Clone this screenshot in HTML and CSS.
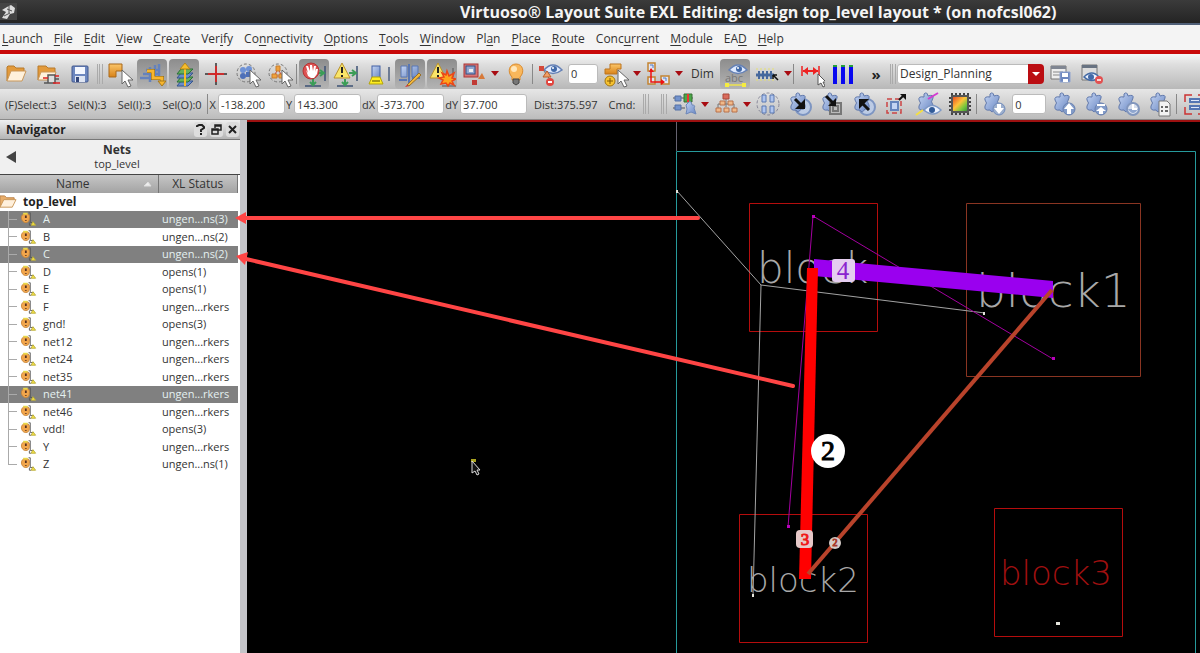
FILE: index.html
```html
<!DOCTYPE html>
<html lang="en">
<head>
<meta charset="utf-8">
<title>Virtuoso Layout Suite EXL</title>
<link rel="stylesheet" href="styles.css">
</head>
<body>
<svg class="defs" aria-hidden="true">
  <defs>
    <linearGradient id="gold" x1="0" y1="0" x2="0" y2="1"><stop offset="0" stop-color="#fbc66a"/><stop offset="1" stop-color="#d88218"/></linearGradient>
    <linearGradient id="blue" x1="0" y1="0" x2="1" y2="1"><stop offset="0" stop-color="#c4d4f2"/><stop offset="1" stop-color="#6a88c4"/></linearGradient>
    <linearGradient id="heat" x1="0" y1="0" x2="1" y2="1"><stop offset="0" stop-color="#e53a1c"/><stop offset=".45" stop-color="#ffc23a"/><stop offset=".7" stop-color="#7ec83c"/><stop offset="1" stop-color="#2b8a3a"/></linearGradient>
    <symbol id="folder" viewBox="0 0 28 28"><path d="M5 21V7l1-1h6l2 2h8v4" fill="#e39a3b" stroke="#b87a2d"/><path d="M5 21l4-10h15l-4 10z" fill="#fff1dc" stroke="#c9975a"/></symbol>
    <symbol id="cursor" viewBox="0 0 28 28"><path d="M16 10v14l3-3 3 6 3-1-3-6h5z" fill="#fff" stroke="#666"/></symbol>
    <symbol id="folderin" viewBox="0 0 28 28"><path d="M4 20V6h8l2 2h7v5" fill="#e39a3b" stroke="#b87a2d"/><path d="M4 20l3-8h15l-3 8z" fill="#fff1dc" stroke="#c9975a"/><path d="M10 23h4v-8h7v8h-7M21 19h4" fill="#ddd" stroke="#555" stroke-width="1.5"/><path d="M9 18h5M21 16h4M19 23h7" stroke="#d22" stroke-width="1.5"/></symbol>
    <symbol id="save" viewBox="0 0 28 28"><rect x="6" y="6" width="16" height="16" rx="1" fill="#6d87bf" stroke="#43598f"/><rect x="9" y="7" width="10" height="7" fill="#f4f7ff"/><rect x="9" y="16" width="10" height="6" fill="#dfe5f2"/><rect x="10" y="17" width="3" height="5" fill="#34477a"/></symbol>
    <symbol id="select" viewBox="0 0 28 28"><path d="M3 4h13v7H10v6H3z" fill="url(#gold)" stroke="#a9691b"/><use href="#cursor"/></symbol>
    <symbol id="route" viewBox="0 0 28 28"><path d="M2 18h14M5 14h17M8 10h13M12 22V7M17 18V5M21 16V4" stroke="#6482bd" stroke-width="2.500" fill="none"/><path d="M9 11h6v7h9v4" fill="none" stroke="#806018" stroke-width="4"/><path d="M9 11h6v7h9v4" fill="none" stroke="#f8b62d" stroke-width="3"/><path d="M20 21h8l-4 5z" fill="#f8b62d" stroke="#a5781d"/></symbol>
    <symbol id="layers" viewBox="0 0 28 28"><path d="M7 26l4-5h12l-5 5z" fill="#6a8ccb" stroke="#34558c"/><path d="M7 22l4-5h12l-5 5z" fill="#67b05b" stroke="#29703a"/><path d="M7 18l4-5h12l-5 5z" fill="#6a8ccb" stroke="#34558c"/><path d="M7 14l4-5h12l-5 5z" fill="#67b05b" stroke="#29703a"/><path d="M15 5v21" stroke="#f7bd2a" stroke-width="2"/><path d="M10 9l5-6 5 6z" fill="#f7bd2a" stroke="#b5851c"/></symbol>
    <symbol id="cross" viewBox="0 0 28 28"><path d="M14 3v22M3 14h22" stroke="#333" stroke-width="1.500"/><path d="M14 6v16M6 14h16" stroke="#f02020" stroke-width="1.500"/></symbol>
    <symbol id="selblue" viewBox="0 0 28 28"><circle cx="12" cy="13" r="9" fill="none" stroke="#777" stroke-dasharray="3 2"/><path d="M12 12h5v5h-5z" fill="#4e70b8"/><circle cx="15" cy="9" r="3" fill="#6e92d6"/><circle cx="9" cy="10" r="3" fill="#6e92d6"/><circle cx="9" cy="16" r="3" fill="#4e70b8"/><use href="#cursor"/></symbol>
    <symbol id="selgold" viewBox="0 0 28 28"><circle cx="12" cy="13" r="9" fill="none" stroke="#777" stroke-dasharray="3 2"/><path d="M12 9l-4 7h8z" stroke="#c44" fill="none"/><path d="M10 6h4v5h-4zM6 14h5v4H6zM13 14h5v4h-5z" fill="#f0a13c" stroke="#c67c2c"/><use href="#cursor"/></symbol>
    <symbol id="rails" viewBox="0 0 28 28"><path d="M25 6v15M5 26h16" stroke="#3c5274" stroke-width="1.500"/><path d="M17 13h7M20 10l4 3-4 3M13 19v6M10 22l3 3 3-3" fill="none" stroke="#3b9d57" stroke-width="2"/></symbol>
    <symbol id="hand" viewBox="0 0 28 28"><use href="#rails"/><circle cx="11" cy="11" r="8" fill="#dd5252" stroke="#b53434"/><path d="M6 10l2 6 3 2h3l3-4 1-5h-2l-1 3 1-6h-2l-1 5-1-6H10v6L8 6H6l2 7z" fill="#fff"/></symbol>
    <symbol id="tri" viewBox="0 0 28 28"><path d="M10 3L2 18h16z" fill="#f9e568" stroke="#b9912e" stroke-linejoin="round"/><path d="M10 7v6M10 15v2" stroke="#222" stroke-width="2"/></symbol>
    <symbol id="warn" viewBox="0 0 28 28"><use href="#rails"/><use href="#tri"/></symbol>
    <symbol id="marker" viewBox="0 0 28 28"><rect x="8" y="6" width="8" height="12" fill="url(#blue)" stroke="#4361a5"/><path d="M8 17h8l3 7H5z" fill="#ffee20" stroke="#b3a30c"/><path d="M8 21h8" stroke="#554d00"/><path d="M25 7v14" stroke="#6d7b94" stroke-width="2"/></symbol>
    <symbol id="pencil" viewBox="0 0 28 28"><path d="M5 6h6v11H5zM16 6h6v11h-6z" fill="url(#blue)" stroke="#5876b3"/><path d="M13 4v21M3 20h8M16 18h8" stroke="#5876b3" stroke-width="2"/><path d="M11 25l12-12 2 2-12 11z" fill="#f2b73c" stroke="#996f28"/><path d="M11 25l2 1-4 1z" fill="#d22"/></symbol>
    <symbol id="boom" viewBox="0 0 28 28"><use href="#tri"/><path d="M14 26h14M25 8v9" stroke="#555"/><path d="M19 11l2 5 5-3-2 5 4 1-4 2 2 4-4-2-2 3-2-3-5 1 2-4-4-2 5-1-2-4 4 2z" fill="#ffa51c" stroke="#ec4617" stroke-width="1.500"/></symbol>
    <symbol id="blocks" viewBox="0 0 28 28"><rect x="4" y="4" width="14" height="13" fill="#d77474" stroke="#aa3434"/><rect x="6" y="6" width="9" height="8" fill="#92a6cf" stroke="#315086"/><rect x="9" y="9" width="4" height="3" fill="#eee"/><path d="M12 20h5v5h-5z" fill="#c13a35"/><path d="M22 13l-4 6h7z" fill="#d77a3a"/></symbol>
    <symbol id="bulb" viewBox="0 0 28 28"><path d="M10 17C5 12 7 4 14 4s9 8 4 13v3h-8z" fill="#f9b75b" stroke="#d98b30"/><circle cx="12" cy="9" r="3" fill="#ffe6ba"/><path d="M11 19h6v4l-3 2-3-2z" fill="#777" stroke="#444"/></symbol>
    <symbol id="eye" viewBox="0 0 28 28"><path d="M8 10q9-10 18 0-9 7-18 0z" fill="#dfeaff" stroke="#6581b5" stroke-width="1.500"/><circle cx="18" cy="9" r="3" fill="#426aa8"/><circle cx="17" cy="8" r="1" fill="#fff"/></symbol>
    <symbol id="eyetree" viewBox="0 0 28 28"><use href="#eye"/><path d="M6 8l4 6 5 7" stroke="#777" fill="none"/><path d="M3 6h5v5H3z" fill="#d4483a"/><path d="M11 11l-4 6h8z" fill="#efa067" stroke="#b85c28"/><circle cx="14" cy="22" r="4" fill="#e2463f"/><path d="M12 22h4" stroke="#fff" stroke-width="2"/></symbol>
    <symbol id="addsel" viewBox="0 0 28 28"><path d="M8 4h11v5h-4v5H3V9h5z" fill="url(#gold)" stroke="#bd741e"/><circle cx="8" cy="21" r="5" fill="#f7c22f" stroke="#a37510"/><path d="M8 18v6M5 21h6" stroke="#805908"/><use href="#cursor"/></symbol>
    <symbol id="path" viewBox="0 0 28 28"><path d="M4 3h7v8H4zM17 16h8v8h-8zM4 17h7v7H4z" fill="#dfe5f4" stroke="#c48431" stroke-width="1.500"/><path d="M7 9v13h12" fill="none" stroke="#e11" stroke-width="1.500"/><path d="M5 12l2-4 3 4zM17 19l4 3-4 3z" fill="#e11"/><path d="M6 5h3v3M19 18h3v3" stroke="#557bc0" fill="none"/></symbol>
    <symbol id="abc" viewBox="0 0 28 28"><use href="#eye"/><path d="M5 25h18" stroke="#eee34d" stroke-width="1.500"/><path d="M4 23h4v4H4zM21 23h4v4h-4z" fill="#f5ec40"/></symbol>
    <symbol id="comb" viewBox="0 0 28 28"><path d="M3 9h19M3 20h19" stroke="#e6e070" stroke-dasharray="2 2"/><path d="M3 15h18" stroke="#46689d" stroke-width="3"/><path d="M6 11v8M10 11v8M14 11v8M18 11v8" stroke="#46689d" stroke-width="2"/><path d="M20 15h4M20 15v4M20 15l5 5" stroke="#111" fill="none" stroke-width="1.500"/></symbol>
    <symbol id="ruler" viewBox="0 0 28 28"><path d="M5 6v10M22 6v10" stroke="#e22" stroke-width="1.500"/><path d="M6 11h15" stroke="#e22" stroke-width="2"/><path d="M11 7l-5 4 5 4zM16 7l5 4-5 4z" fill="#e22"/><path d="M21 14v11l3-2 2 4 2-1-2-4h3z" fill="#fff" stroke="#555"/></symbol>
    <symbol id="bars" viewBox="0 0 28 28"><path d="M4 6h4v18H4zM12 6h4v18h-4zM20 6h4v18h-4z" fill="#0808f0"/><path d="M4 5h4v2H4zM12 5h4v2h-4zM20 5h4v2h-4z" fill="#24a03a"/></symbol>
    <symbol id="panelsave" viewBox="0 0 28 28"><path d="M5 6h15v13H5z" fill="#eee" stroke="#777"/><path d="M5 6h15v3H5z" fill="#808692"/><path d="M7 12h10M7 15h8" stroke="#888"/><path d="M14 12h10v10H14z" fill="#6d87bf" stroke="#8fa3cf"/><path d="M16 13h6v4h-6zM17 19h5v3h-5z" fill="#fff"/></symbol>
    <symbol id="paneleye" viewBox="0 0 28 28"><path d="M4 5h15v15H4z" fill="#ddd" stroke="#777"/><path d="M4 5h15v3H4z" fill="#687382"/><path d="M6 17q8-8 15 0-7 7-15 0z" fill="#edf3ff" stroke="#456ba5" stroke-width="1.500"/><circle cx="13" cy="17" r="3" fill="#426aa8"/><circle cx="21" cy="20" r="4" fill="#e25151"/><path d="M19 20h4" stroke="#fff" stroke-width="1.500"/></symbol>
    <symbol id="star" viewBox="0 0 28 28"><path d="M10 4q3-3 4 2 6-2 5 2-3 4 0 7 1 5-4 4-3 5-5 1-6 1-5-4 3-3 0-6-1-4 5-3z" fill="url(#blue)" stroke="#6078ab"/></symbol>
    <symbol id="align" viewBox="0 0 28 28"><path d="M3 8h20M3 18h12" stroke="#555"/><path d="M5 6h6v5H5zM5 15h6v5H5z" fill="#7393cc" stroke="#5571a5"/><path d="M14 4h8v8h-8z" fill="#48a846" stroke="#396f35"/><path d="M18 4v8" stroke="#e33" stroke-width="2"/><path d="M19 12q2-2 3 3 4 0 2 3l2 6-5-2-5 2 1-5-1-4z" fill="url(#blue)" stroke="#6d87b9"/></symbol>
    <symbol id="tree" viewBox="0 0 28 28"><path d="M14 9v8M6 18v-4h16v4" stroke="#777" fill="none"/><path d="M11 4h6v5h-6z" fill="#d96b5c" stroke="#a94838"/><path d="M8 11h5v4H8zM16 11h5v4h-5zM4 18h5v4H4zM12 18h5v4h-5zM20 18h5v4h-5z" fill="#f0b989" stroke="#b8704a"/></symbol>
    <symbol id="four" viewBox="0 0 28 28"><circle cx="14" cy="14" r="11" fill="none" stroke="#889" stroke-dasharray="3 2"/><path d="M8 5h4v7H8zM16 5h4v7h-4zM8 16h4v7H8zM16 16h4v7h-4z" fill="#afc5ef" stroke="#5b78b1"/></symbol>
    <symbol id="starin" viewBox="0 0 28 28"><circle cx="17" cy="17" r="8" fill="#bccbe5" stroke="#7d95c2" stroke-width="2"/><use href="#star"/><path d="M9 9l7 7" stroke="#111" stroke-width="3"/><path d="M19 9v10H9z" fill="#111"/></symbol>
    <symbol id="starchip" viewBox="0 0 28 28"><use href="#star"/><path d="M12 13h11v11H12zM15 16h5v5h-5z" fill="#bbb" stroke="#777" stroke-width="2"/><path d="M8 6l8 8" stroke="#111" stroke-width="3"/><path d="M18 8v8h-8z" fill="#111"/></symbol>
    <symbol id="starout" viewBox="0 0 28 28"><circle cx="17" cy="17" r="8" fill="#bccbe5" stroke="#7d95c2" stroke-width="2"/><use href="#star"/><path d="M19 20l-7-7" stroke="#111" stroke-width="3"/><path d="M9 19V9h10z" fill="#111"/></symbol>
    <symbol id="expand" viewBox="0 0 28 28"><path d="M5 9h14v14H5z" fill="none" stroke="#c44" stroke-width="1.500" stroke-dasharray="5 3"/><path d="M9 12h7v8H9z" fill="#c3d3f3" stroke="#6584bd" stroke-width="2"/><path d="M17 10l4-4" stroke="#111" stroke-width="2"/><path d="M18 4h6v6z" fill="#111"/></symbol>
    <symbol id="stareye" viewBox="0 0 28 28"><use href="#star"/><path d="M14 9l10-6" stroke="#d43ad1" stroke-width="2"/><path d="M2 25l7-5" stroke="#f5df3f" stroke-width="2"/><path d="M10 20q8-9 17 0-8 8-17 0z" fill="#edf3ff" stroke="#7d98c5" stroke-width="1.500"/><circle cx="18" cy="20" r="3" fill="#315b98"/></symbol>
    <symbol id="chip" viewBox="0 0 28 28"><path d="M5 5h18v18H5z" fill="none" stroke="#444" stroke-width="4" stroke-dasharray="2 2"/><path d="M6 6h16v16H6z" fill="url(#heat)" stroke="#555" stroke-width="2"/></symbol>
    <symbol id="stardown" viewBox="0 0 28 28"><use href="#star"/><circle cx="19" cy="19" r="6" fill="#9baecd" stroke="#738dbc"/><path d="M17 14h4v4h3l-5 6-5-6h3z" fill="#fff"/></symbol>
    <symbol id="starup" viewBox="0 0 28 28"><use href="#star"/><circle cx="19" cy="19" r="6" fill="#829bc8" stroke="#6880b0"/><path d="M17 24h4v-5h3l-5-6-5 6h3z" fill="#fff"/></symbol>
    <symbol id="startop" viewBox="0 0 28 28"><use href="#star"/><circle cx="19" cy="19" r="6" fill="#829bc8" stroke="#6880b0"/><path d="M15 14h8v2h-8zM17 24h4v-3h3l-5-4-5 4h3z" fill="#fff"/></symbol>
    <symbol id="starclock" viewBox="0 0 28 28"><use href="#star"/><circle cx="19" cy="19" r="6" fill="#d7dfed" stroke="#8196bd" stroke-width="2"/><path d="M14 19h10q-5 8-10 0z" fill="#8fa6cf"/><path d="M19 14v5h4" fill="none" stroke="#fff" stroke-width="2"/></symbol>
    <symbol id="starlist" viewBox="0 0 28 28"><use href="#star"/><path d="M13 11h8l3 3v12H13z" fill="#f2f2f2" stroke="#777"/><path d="M15 17h2M15 21h2M19 17h3M19 21h3" stroke="#666" stroke-width="2"/></symbol>
    <symbol id="frame" viewBox="0 0 28 28"><path d="M5 12V5h7M18 5h7v7M25 17v7h-7M12 24H5v-7" fill="none" stroke="#c33" stroke-width="1.500"/><path d="M10 9h10v3H10zM10 16h10v3H10z" fill="#dfe8fb" stroke="#5576b3" stroke-width="2"/></symbol>
    <symbol id="net" viewBox="0 0 18 18"><path d="M9 2h2v11h4" fill="none" stroke="#555"/><path d="M6 3q5 0 4 5 0 5-4 5T1 8q0-5 5-5z" fill="#f2a64c" stroke="#c9863a"/><path d="M6 5v3M6 10v1" stroke="#532" stroke-width="2"/><path d="M3 3h5" stroke="#e8d848" stroke-width="2"/><path d="M10 13v3h2" stroke="#555" fill="none"/><path d="M14 12l3 4h-5z" fill="#f6e344" stroke="#b9ac3a"/></symbol>
  </defs>
</svg>

<div class="app">
  <header class="titlebar">
    <svg class="logo" viewBox="0 0 17 17" aria-hidden="true"><rect width="17" height="17" fill="#444"/><path d="M2 15l4-6-4-2 5-3 4-2 4 3-1 5-4 1-3 5z" fill="#ddd"/><path d="M7 6l5 2M9 3v7M4 13l6-3" stroke="#555" fill="none"/></svg>
    <h1>Virtuoso® Layout Suite EXL Editing: design top_level layout * (on nofcsl062)</h1>
  </header>
  <nav class="menu" aria-label="Main menu">
    <button><u>L</u>aunch</button><button><u>F</u>ile</button><button><u>E</u>dit</button><button><u>V</u>iew</button><button><u>C</u>reate</button><button>Ver<u>i</u>fy</button><button>Co<u>n</u>nectivity</button><button><u>O</u>ptions</button><button><u>T</u>ools</button><button><u>W</u>indow</button><button>Pl<u>a</u>n</button><button><u>P</u>lace</button><button><u>R</u>oute</button><button>Conc<u>u</u>rrent</button><button><u>M</u>odule</button><button>EA<u>D</u></button><button><u>H</u>elp</button>
  </nav>

  <div class="toolbar first" role="toolbar" aria-label="Edit tools">
    <button class="tool" aria-label="Open"><svg><use href="#folder"/></svg></button>
    <button class="tool" aria-label="Open design"><svg><use href="#folderin"/></svg></button>
    <button class="tool" aria-label="Save"><svg><use href="#save"/></svg></button>
    <i class="grip"></i>
    <button class="tool" aria-label="Select"><svg><use href="#select"/></svg></button>
    <button class="tool on" aria-label="Route"><svg><use href="#route"/></svg></button>
    <button class="tool on" aria-label="Layers"><svg><use href="#layers"/></svg></button>
    <button class="tool" aria-label="Crosshair"><svg><use href="#cross"/></svg></button>
    <button class="tool" aria-label="Select objects"><svg><use href="#selblue"/></svg></button>
    <button class="tool" aria-label="Select hierarchy"><svg><use href="#selgold"/></svg></button>
    <i class="sep"></i>
    <button class="tool on" aria-label="Enforce rules"><svg><use href="#hand"/></svg></button>
    <button class="tool" aria-label="Notify rules"><svg><use href="#warn"/></svg></button>
    <button class="tool" aria-label="Highlight"><svg><use href="#marker"/></svg></button>
    <button class="tool on" aria-label="Edit markers"><svg><use href="#pencil"/></svg></button>
    <button class="tool on" aria-label="Violations"><svg><use href="#boom"/></svg></button>
    <button class="tool" aria-label="Blocks"><svg><use href="#blocks"/></svg></button>
    <button class="drop" aria-label="Block options"></button>
    <button class="tool" aria-label="Hint"><svg><use href="#bulb"/></svg></button>
    <i class="sep"></i>
    <button class="tool" aria-label="Visible levels"><svg><use href="#eyetree"/></svg></button>
    <input class="level" aria-label="Level" value="0">
    <button class="tool" aria-label="Add selection"><svg><use href="#addsel"/></svg></button>
    <button class="drop" aria-label="Selection options"></button>
    <button class="tool" aria-label="Path"><svg><use href="#path"/></svg></button>
    <button class="drop" aria-label="Path options"></button>
    <span class="dim">Dim</span>
    <button class="tool on" aria-label="Labels"><svg><use href="#abc"/><text class="abc" x="4" y="22">abc</text></svg></button>
    <button class="tool" aria-label="Rows"><svg><use href="#comb"/></svg></button>
    <button class="drop" aria-label="Row options"></button>
    <i class="sep"></i>
    <button class="tool" aria-label="Ruler"><svg><use href="#ruler"/></svg></button>
    <button class="tool" aria-label="Tracks"><svg><use href="#bars"/></svg></button>
    <button class="more" aria-label="More tools">»</button>
    <i class="grip"></i>
    <span class="combo"><select aria-label="Workspace"><option>Design_Planning</option></select></span>
    <button class="tool" aria-label="Save workspace"><svg><use href="#panelsave"/></svg></button>
    <button class="tool" aria-label="Delete workspace"><svg><use href="#paneleye"/></svg></button>
  </div>

  <div class="toolbar second" role="toolbar" aria-label="Status and hierarchy">
    <div class="counts"><span>(F)Select:3</span><span>Sel(N):3</span><span>Sel(I):3</span><span>Sel(O):0</span></div>
    <i class="sep"></i>
    <label class="coord">X <input value="-138.200"></label>
    <label class="coord">Y <input value="143.300"></label>
    <label class="coord">dX <input value="-373.700"></label>
    <label class="coord">dY <input value="37.700"></label>
    <div class="counts dist"><span>Dist:375.597</span><span>Cmd:</span></div>
    <div class="grips"><i class="grip"></i><i class="grip"></i></div>
    <button class="tool" aria-label="Align"><svg><use href="#align"/></svg></button>
    <button class="drop" aria-label="Align options"></button>
    <button class="tool" aria-label="Hierarchy"><svg><use href="#tree"/></svg></button>
    <button class="drop" aria-label="Hierarchy options"></button>
    <button class="tool" aria-label="Group"><svg><use href="#four"/></svg></button>
    <button class="tool" aria-label="Move in"><svg><use href="#starin"/></svg></button>
    <button class="tool" aria-label="Move to block"><svg><use href="#starchip"/></svg></button>
    <button class="tool" aria-label="Move out"><svg><use href="#starout"/></svg></button>
    <button class="tool" aria-label="Expand"><svg><use href="#expand"/></svg></button>
    <button class="tool" aria-label="Show block"><svg><use href="#stareye"/></svg></button>
    <button class="tool" aria-label="Congestion map"><svg><use href="#chip"/></svg></button>
    <i class="sep"></i>
    <button class="tool" aria-label="Descend"><svg><use href="#stardown"/></svg></button>
    <input class="level" aria-label="Depth" value="0">
    <button class="tool" aria-label="Ascend"><svg><use href="#starup"/></svg></button>
    <button class="tool" aria-label="Top"><svg><use href="#startop"/></svg></button>
    <button class="tool" aria-label="History"><svg><use href="#starclock"/></svg></button>
    <button class="tool" aria-label="List"><svg><use href="#starlist"/></svg></button>
    <i class="sep"></i>
    <button class="tool" aria-label="Frame"><svg><use href="#frame"/></svg></button>
  </div>

  <main class="work">
    <aside class="side">
      <div class="dock"><h2>Navigator</h2>
        <button aria-label="Help"><svg viewBox="0 0 13 13"><path d="M3 4V3l2-1h3l2 2v1L7 7v2M7 10v2" fill="none" stroke="#222" stroke-width="2"/></svg></button>
        <button aria-label="Float"><svg viewBox="0 0 13 13"><path d="M5 5V2h6v5H8M2 6h6v5H2zM5 3h6M2 7h6" fill="none" stroke="#222" stroke-width="1.500"/></svg></button>
        <button aria-label="Close"><svg viewBox="0 0 13 13"><path d="M3 3l7 7M10 3l-7 7" stroke="#222" stroke-width="2"/></svg></button>
      </div>
      <div class="scope"><button aria-label="Back"><svg viewBox="0 0 10 12"><path d="M10 0v12L0 6z" fill="#444"/></svg></button><div><strong>Nets</strong><span>top_level</span></div></div>
      <table class="heads">
        <thead><tr><th>Name<svg viewBox="0 0 9 6"><path d="M1 5l4-4 3 4z" fill="#eee" stroke="#ddd"/></svg></th><th>XL Status</th></tr></thead>
      </table>
      <table class="nets" aria-label="Nets">
        <colgroup><col class="namecol"><col></colgroup>
        <tbody>
          <tr class="root"><th colspan="2"><svg viewBox="0 0 18 17"><path d="M0 14V2h5l2 2h8v5" fill="#e9ae6b" stroke="#b9824a"/><path d="M0 14l4-8h13l-4 8z" fill="#fff0dc" stroke="#c9975a"/></svg>top_level</th></tr>
          <tr class="sel"><td><svg><use href="#net"/></svg>A</td><td>ungen...ns(3)</td></tr>
          <tr><td><svg><use href="#net"/></svg>B</td><td>ungen...ns(2)</td></tr>
          <tr class="sel"><td><svg><use href="#net"/></svg>C</td><td>ungen...ns(2)</td></tr>
          <tr><td><svg><use href="#net"/></svg>D</td><td>opens(1)</td></tr>
          <tr><td><svg><use href="#net"/></svg>E</td><td>opens(1)</td></tr>
          <tr><td><svg><use href="#net"/></svg>F</td><td>ungen...rkers</td></tr>
          <tr><td><svg><use href="#net"/></svg>gnd!</td><td>opens(3)</td></tr>
          <tr><td><svg><use href="#net"/></svg>net12</td><td>ungen...rkers</td></tr>
          <tr><td><svg><use href="#net"/></svg>net24</td><td>ungen...rkers</td></tr>
          <tr><td><svg><use href="#net"/></svg>net35</td><td>ungen...rkers</td></tr>
          <tr class="sel"><td><svg><use href="#net"/></svg>net41</td><td>ungen...rkers</td></tr>
          <tr><td><svg><use href="#net"/></svg>net46</td><td>ungen...rkers</td></tr>
          <tr><td><svg><use href="#net"/></svg>vdd!</td><td>opens(3)</td></tr>
          <tr><td><svg><use href="#net"/></svg>Y</td><td>ungen...rkers</td></tr>
          <tr class="last"><td><svg><use href="#net"/></svg>Z</td><td>ungen...ns(1)</td></tr>
        </tbody>
      </table>
    </aside>
    <section class="canvas" aria-label="Layout canvas">
      <svg viewBox="247 122 953 531" preserveAspectRatio="xMinYMin meet">
        <path d="M676.500 122v29" stroke="#666370" fill="none"/>
        <path d="M676.500 900V151.500H1195.500V900" fill="none" stroke="#269a9c"/>
        <g class="name">
          <text x="757" y="283" font-size="42">block</text>
          <text x="976" y="307" font-size="47">block1</text>
          <text x="747" y="592" font-size="34">block2</text>
          <text class="redname" x="1000" y="585" font-size="34">block3</text>
        </g>
        <g fill="none">
          <path d="M749.500 203.500h128v128h-128zM739.500 514.500h128v128h-128zM994.500 508.500h128v128h-128z" stroke="#b50d0d"/>
          <path d="M966.500 203.500h174v173h-174z" stroke="#8a3522"/>
          <path d="M677 191L761 285 985 313M761 285L753 597" stroke="#a3a3a3"/>
          <path d="M788 527L813 216 1053 359" stroke="#a3009f"/>
        </g>
        <path d="M676 190h2v3h-2zM752 594h2v3h-2zM983 312h2v3h-2zM1056 622h4v3h-4z" fill="#e4e4dc"/>
        <path d="M787 525h3v3h-3zM812 215h3v3h-3zM1052 357h3v3h-3z" fill="#b900bb"/>
        <path d="M814 259L1053 281V298L814 276z" fill="#9a00ef"/>
        <path d="M807 268H818L811 579H799z" fill="#f00"/>
        <path d="M1052 290L808 574" stroke="#b9432b" stroke-width="4"/>
        <rect x="832" y="259" width="23" height="23" rx="3" fill="#e5cdf0"/>
        <circle cx="828" cy="451" r="17" fill="#fff"/>
        <rect x="796" y="530" width="17" height="18" rx="4" fill="#e6c8c8"/>
        <circle cx="835" cy="543" r="6" fill="#d5cbc7"/>
        <g class="mark">
          <text x="843" y="279" font-size="25" fill="#8a22cf">4</text>
          <text x="828" y="460" font-size="28" fill="#000" stroke="#000">2</text>
          <text x="805" y="545" font-size="17" fill="#f01818" stroke="#f01818">3</text>
          <text x="835" y="546" font-size="10" fill="#a83a2a" stroke="#a83a2a">2</text>
        </g>
        <g stroke="#ff4545" stroke-width="4" stroke-linecap="round"><path d="M698 218H246M793 386L246 259"/></g>
        <path d="M235 218l11-6v12zM236 256l12-4-3 13z" fill="#ff4545"/>
        <path d="M471 459h5v3h-5z" fill="#aaa320"/>
        <path d="M472 461v12l3-2 2 4 2-1-2-4h3z" fill="#111" stroke="#ddd"/>
      </svg>
    </section>
  </main>
</div>
</body>
</html>
```
FILE: styles.css
```css
* { box-sizing: border-box; }
body { margin: 0; font-family: "Open Sans", "Noto Sans", sans-serif; font-size: 12px; color: #333; background: #000; }
button { border: 0; padding: 0; margin: 0; background: none; font: inherit; color: inherit; }
.defs { display: block; width: 0; height: 0; }
.app { display: flex; flex-direction: column; height: 100vh; overflow: hidden; }

.titlebar { display: flex; align-items: center; flex: none; height: 25px; background: linear-gradient(#3b3b3b, #242424); border-bottom: 2px solid #506078; }
.logo { width: 17px; height: 17px; }
.titlebar h1 { margin: 0 0 0 443px; font-size: 16px; line-height: 22px; font-weight: 700; color: #f4f4f4; white-space: nowrap; }

.menu { display: flex; flex: none; gap: 11px; height: 29px; padding: 2px 2px 0; background: #f4f4f4; border-bottom: 4px solid #c80808; }
.menu button { font-size: 12px; white-space: nowrap; }
.menu u { text-underline-offset: 2px; }

.toolbar { display: flex; align-items: center; flex: none; overflow: hidden; white-space: nowrap; }
.toolbar > * { flex: none; }
.first { height: 35px; padding-top: 4px; background: linear-gradient(#f5f5f5, #dedede 30%, #b8b8b8); }
.second { height: 31px; background: linear-gradient(#e6e6e6, #bcbcbc); border-bottom: 1px solid #8a8a8a; font-size: 11px; }
.tool { display: flex; align-items: center; justify-content: center; width: 32px; height: 30px; }
.tool svg { width: 28px; height: 28px; display: block; }
.on { width: 30px; margin: 0 1px; border-radius: 4px; background: linear-gradient(#8d8d8d, #b4b4b4); }
.abc { font-size: 11px; fill: #777; }
.sep { width: 2px; height: 20px; border-left: 1px solid #888; }
.grip { width: 6px; height: 20px; margin: 0 1px; border: 1px solid #aaa; border-width: 0 1px; background: linear-gradient(90deg, transparent 1px, #aaa 1px, #aaa 2px, transparent 2px); }
.drop { width: 10px; height: 20px; display: flex; align-items: center; justify-content: center; }
.drop::before { content: ""; border: 4px solid transparent; border-top: 5px solid #a80c12; border-bottom: 0; }
.dim { width: 35px; padding-left: 7px; }
.more { width: 30px; padding-left: 4px; font-size: 15px; line-height: 20px; font-weight: 700; color: #222; }
.toolbar input, .combo select { height: 20px; border: 1px solid #bbb; border-radius: 3px; background: #fff; font-family: inherit; font-size: 11px; color: #333; padding: 0 2px; }
.level { width: 30px; margin: 0 2px; }
.second .level { width: 34px; }
.combo { position: relative; width: 147px; }
.combo select { appearance: none; width: 100%; border-radius: 3px 5px 5px 3px; font-size: 12px; }
.combo::after { content: ""; position: absolute; right: 0; top: 0; width: 16px; height: 20px; border-radius: 0 4px 4px 0; pointer-events: none; background: #bb0d12; }
.combo::before { content: ""; position: absolute; z-index: 1; right: 4px; top: 8px; border: 4px solid transparent; border-top-color: #fff; border-bottom: 0; pointer-events: none; }
.counts { display: flex; gap: 11px; padding: 0 5px; }
.coord { display: flex; align-items: center; gap: 2px; padding-left: 1px; }
.coord input { width: 67px; }
.dist { padding-left: 7px; }
.grips { display: flex; gap: 10px; padding-left: 2px; }

.work { display: flex; flex: 1; min-height: 0; overflow: hidden; }
.side { flex: none; width: 247px; background: #fff; border-right: 7px solid #c4c4c8; }
.dock { display: flex; align-items: center; gap: 3px; height: 20px; padding: 0 1px 0 6px; background: linear-gradient(#f0f0f0, #b4b4b4); border-bottom: 1px solid #777; }
.dock h2 { flex: 1; margin: 0; font-size: 12px; color: #222; }
.dock button { width: 13px; height: 15px; border-radius: 3px; background: #ddd; }
.dock svg { display: block; width: 13px; height: 13px; }
.scope { display: flex; align-items: center; height: 35px; padding: 0 6px; background: #f0f0f0; border-bottom: 1px solid #444; }
.scope svg { display: block; width: 10px; height: 12px; }
.scope div { flex: 1; display: flex; flex-direction: column; align-items: center; padding-right: 16px; line-height: 14px; }
.scope strong { font-size: 12px; }
.scope span { font-size: 11px; }
table { width: 238px; border-collapse: collapse; table-layout: fixed; }
.heads { background: linear-gradient(#c6c6c6, #a3a3a3); }
.heads th { height: 18px; padding: 0; font-weight: 400; line-height: 18px; }
.heads th:first-child { width: 158px; padding-left: 56px; text-align: left; }
.heads th + th { border-left: 1px solid #777; border-right: 1px solid #777; }
.heads svg { width: 9px; height: 6px; float: right; margin: 6px 6px 0 0; }
.nets { height: 280px; font-size: 11px; color: #333; }
.namecol { width: 162px; }
.nets td, .nets th { padding: 0; line-height: 16px; text-align: left; vertical-align: middle; white-space: nowrap; }
.nets td:first-child { background: linear-gradient(90deg, transparent 8px, #aaa 8px, #aaa 17px, transparent 17px) 0 8px / 100% 1px no-repeat, linear-gradient(#aaa, #aaa) 8px 0 / 1px 100% no-repeat; padding-left: 20px; }
.nets .last td:first-child { background-size: 100% 1px, 1px 50%; }
.nets svg { width: 17px; height: 16px; vertical-align: top; margin-right: 6px; }
.nets th { font-size: 12px; color: #222; }
.nets .sel { background: #808080; color: #e4f0f0; }

.canvas { flex: 1; min-width: 0; background: #000; border-top: 2px solid #9c1010; }
.canvas svg { display: block; width: 100%; overflow: visible; position: relative; }
.name { font-family: "DejaVu Sans Light", "DejaVu Sans", sans-serif; font-weight: 200; fill: #a8a8a8; }
.redname { fill: #a01010; }
.mark { font-family: "Liberation Serif", serif; text-anchor: middle; }
```
